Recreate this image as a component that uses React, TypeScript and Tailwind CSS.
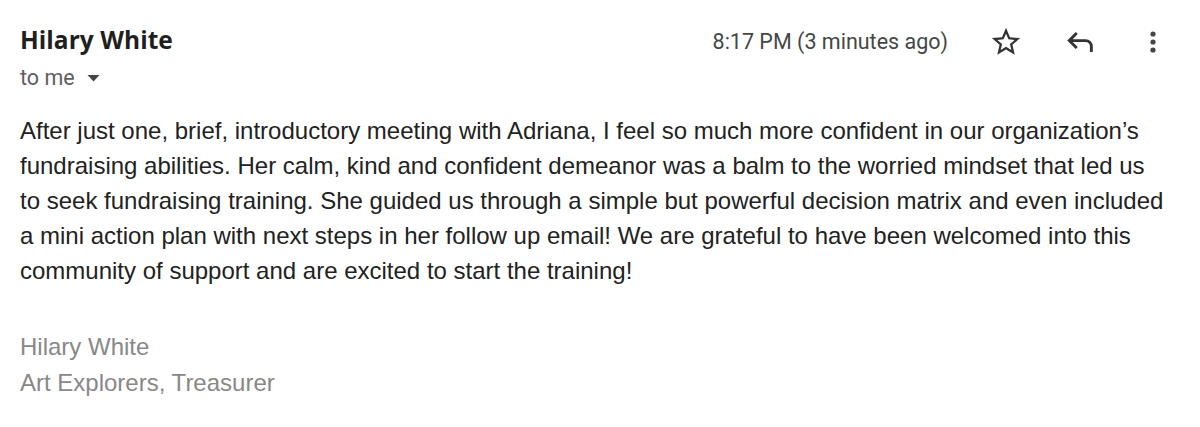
import React from "react";

export default function App() {
  return (
    <div className="w-[1200px] h-[427px] bg-white overflow-hidden px-[20px]">
      <div className="flex items-start justify-between pt-[24px]">
        <div className="flex flex-col">
          <div className="text-[24.5px] leading-[32px] font-bold text-[#1f1f1f] tracking-[0.05px]" style={{ fontFamily: "'Open Sans', Roboto, sans-serif" }}>
            Hilary White
          </div>
          <div className="flex items-center gap-[12px] text-[21.5px] leading-[26px] text-[#5e5e5e] mt-[9px]" style={{ fontFamily: "Roboto, sans-serif" }}>
            <span>to me</span>
            <svg width="13" height="8" viewBox="0 0 13 8"><path d="M0.5 1h12L6.5 7.5z" fill="#444" /></svg>
          </div>
        </div>
        <div className="flex items-center mt-[1px] pr-[22px]">
          <span className="text-[21.5px] leading-[34px] text-[#444746] mr-[41px]" style={{ fontFamily: "Roboto, sans-serif" }}>
            8:17 PM (3 minutes ago)
          </span>
          <svg width="34" height="34" viewBox="0 0 24 24" className="mr-[40px]">
            <path d="M22 9.24l-7.19-.62L12 2 9.19 8.63 2 9.24l5.46 4.73L5.82 21 12 17.27 18.18 21l-1.63-7.03L22 9.24zM12 15.4l-3.76 2.27 1-4.28-3.32-2.88 4.38-.38L12 6.1l1.71 4.04 4.38.38-3.32 2.88 1 4.28L12 15.4z" fill="#333" />
          </svg>
          <svg width="34" height="34" viewBox="0 -960 960 960" className="mr-[51px]">
            <path d="M760-200v-160q0-50-35-85t-85-35H273l144 144-57 56-240-240 240-240 57 56-144 144h367q83 0 141.5 58.5T840-360v160h-80Z" fill="#333" />
          </svg>
          <svg width="10" height="34" viewBox="0 0 10 34">
            <circle cx="5" cy="9" r="2.6" fill="#444" />
            <circle cx="5" cy="17" r="2.6" fill="#444" />
            <circle cx="5" cy="25" r="2.6" fill="#444" />
          </svg>
        </div>
      </div>
      <div className="mt-[22px] w-[1147px] text-[24px] leading-[35px] text-[#222222]" style={{ fontFamily: "'Liberation Sans', Arial, sans-serif" }}>
        <p>
          After just one, brief, introductory meeting with Adriana, I feel so much more confident in our organization’s fundraising abilities. Her calm, kind and confident demeanor was a balm to the worried mindset that led us to seek fundraising training. She guided us through a simple but powerful decision matrix and even included a mini action plan with next steps in her follow up email! We are grateful to have been welcomed into this community of support and are excited to start the training!
        </p>
        <div className="mt-[41px] text-[#888888] leading-[36px]">
          <div>Hilary White</div>
          <div>Art Explorers, Treasurer</div>
        </div>
      </div>
    </div>
  );
}
